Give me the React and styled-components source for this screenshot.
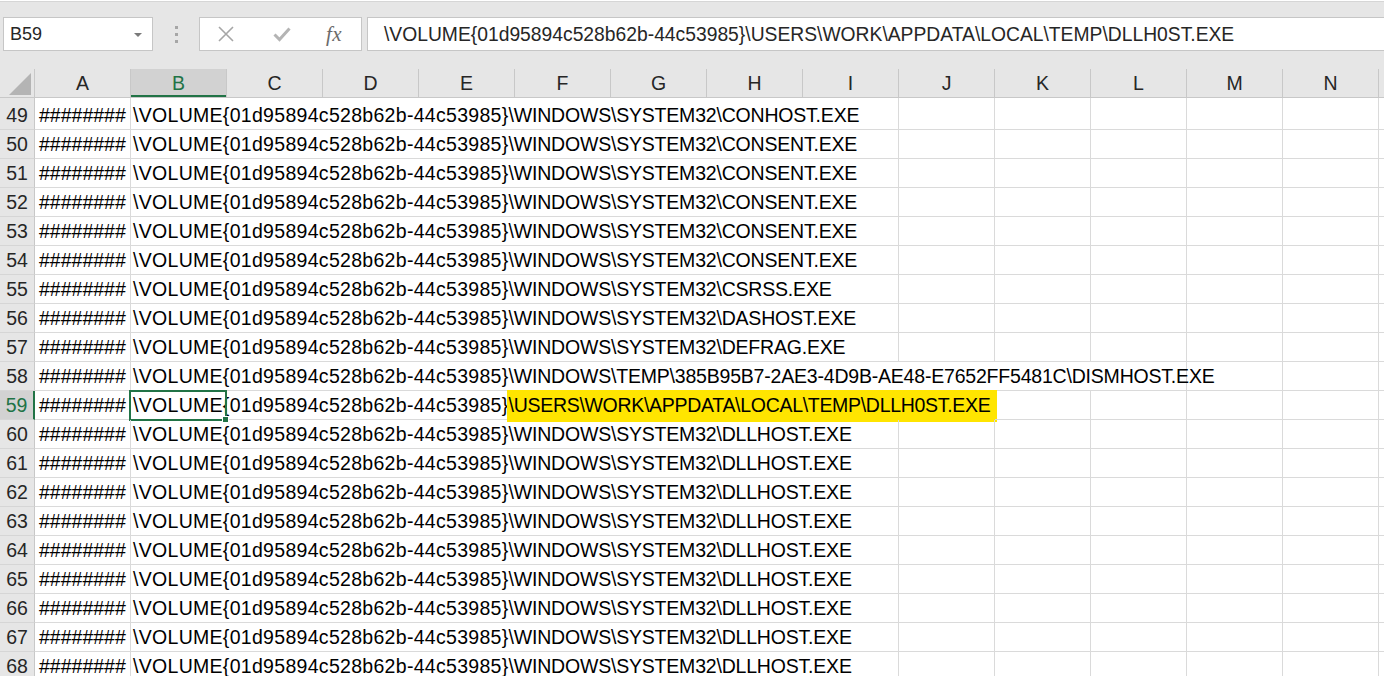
import React from 'react';
import styled, { createGlobalStyle } from 'styled-components';

const GlobalStyle = createGlobalStyle`
  html, body {
    margin: 0;
    padding: 0;
    background: #ffffff;
  }
  body {
    font-family: "Liberation Sans", Arial, sans-serif;
  }
`;

const Window = styled.div`
  width: 1384px;
  height: 676px;
  overflow: hidden;
  background: #ffffff;
`;

const Toolbar = styled.div`
  height: 68px;
  box-sizing: border-box;
  background: #e6e6e6;
  border-top: 1px solid #d6d6d6;
  margin-top: 1px;
  padding: 15px 0 0 3px;
  display: flex;
  align-items: flex-start;
`;

const NameBox = styled.div`
  width: 150px;
  height: 34px;
  box-sizing: border-box;
  background: #ffffff;
  border: 1px solid #c6c6c6;
  display: flex;
  align-items: center;
  justify-content: space-between;
  padding: 1px 10px 0 6px;
  font-size: 18px;
  color: #262626;
`;

const Caret = styled.span`
  width: 0;
  height: 0;
  border-left: 4px solid transparent;
  border-right: 4px solid transparent;
  border-top: 4px solid #7a7a7a;
`;

const Grip = styled.div`
  width: 46px;
  height: 34px;
  display: flex;
  flex-direction: column;
  align-items: center;
  justify-content: center;
  gap: 4px;
`;

const GripDot = styled.span`
  width: 3px;
  height: 3px;
  background: #a6a6a6;
`;

const FxBox = styled.div`
  width: 163px;
  height: 34px;
  box-sizing: border-box;
  background: #ffffff;
  border: 1px solid #c6c6c6;
  display: flex;
  align-items: center;
  padding-left: 18px;
`;

const FxButton = styled.div`
  width: ${({ $w }) => $w}px;
  height: 32px;
  display: flex;
  align-items: center;
  justify-content: flex-start;
`;

const FxLabel = styled.span`
  font-family: "Liberation Serif", "Times New Roman", serif;
  font-style: italic;
  font-size: 21px;
  color: #6b6b6b;
  letter-spacing: 0.5px;
`;

const FormulaInput = styled.div`
  flex: 1;
  margin-left: 5px;
  height: 34px;
  box-sizing: border-box;
  background: #ffffff;
  border: 1px solid #c6c6c6;
  border-right: none;
  display: flex;
  align-items: center;
  padding: 1px 0 0 16px;
  font-size: 19.3px;
  color: #262626;
  white-space: nowrap;
  overflow: hidden;
`;

const HeaderRow = styled.div`
  display: flex;
  height: 28px;
  background: #e6e6e6;
  border-bottom: 1px solid #c8c8c8;
`;

const Corner = styled.div`
  width: 35px;
  flex: none;
  border-right: 1px solid #c8c8c8;
  box-sizing: border-box;
  display: flex;
  align-items: flex-end;
  justify-content: flex-end;
  padding: 0 3px 2px 0;
`;

const ColHeader = styled.div`
  width: 96px;
  flex: none;
  box-sizing: border-box;
  border-right: 1px solid #c8c8c8;
  display: flex;
  align-items: center;
  justify-content: center;
  font-size: 19.5px;
  line-height: 28px;
  color: ${({ $active }) => ($active ? '#217346' : '#262626')};
  background: ${({ $active }) => ($active ? '#d2d2d2' : 'transparent')};
  box-shadow: ${({ $active }) => ($active ? 'inset 0 -2px 0 #217346' : 'none')};
`;

const HeaderFill = styled.div`
  flex: 1;
`;

const Row = styled.div`
  display: flex;
  height: ${({ $h }) => $h}px;
  font-size: 19.5px;
  line-height: 22px;
  position: relative;
`;

const RowHeader = styled.div`
  width: 35px;
  flex: none;
  box-sizing: border-box;
  background: ${({ $active }) => ($active ? '#d2d2d2' : '#e6e6e6')};
  color: ${({ $active }) => ($active ? '#217346' : '#262626')};
  border-right: ${({ $active }) => ($active ? '2px solid #217346' : '1px solid #c8c8c8')};
  border-bottom: 1px solid #d6d6d6;
  display: flex;
  align-items: flex-end;
  justify-content: center;
  padding-bottom: 3px;
`;

const Cell = styled.div`
  width: ${({ $span = 1 }) => $span * 96}px;
  flex: none;
  box-sizing: border-box;
  border-right: 1px solid #dadada;
  border-bottom: 1px solid #dadada;
  display: flex;
  align-items: flex-end;
  padding: 0 0 3px ${({ $pad = 0 }) => $pad}px;
  white-space: nowrap;
  color: #000000;
  position: relative;
`;

const CellText = styled.span`
  display: block;
  white-space: nowrap;
`;

const VolPart = styled.span`
  letter-spacing: 0.3px;
`;

const PathPart = styled.span`
  letter-spacing: -0.2px;
`;

const FillCell = styled.div`
  flex: 1;
  border-bottom: 1px solid #dadada;
`;

const Highlight = styled.span`
  background: #ffe500;
  letter-spacing: -0.3px;
  padding: 4px 7px 6px 2px;
  margin-left: -2px;
`;

const Selection = styled.div`
  position: absolute;
  left: -2px;
  top: -1px;
  width: 98px;
  height: 31px;
  box-sizing: border-box;
  border: 2px solid #217346;
  pointer-events: none;
`;

const FillHandle = styled.span`
  position: absolute;
  right: -4px;
  bottom: -4px;
  width: 5px;
  height: 5px;
  background: #217346;
  border: 1px solid #ffffff;
`;

const COLS = ['A', 'B', 'C', 'D', 'E', 'F', 'G', 'H', 'I', 'J', 'K', 'L', 'M', 'N'];
const VOL = '\\VOLUME{01d95894c528b62b-44c53985}';
const SYS = '\\WINDOWS\\SYSTEM32\\';

const rows = [
  { n: 49, file: SYS + 'CONHOST.EXE', span: 8 },
  { n: 50, file: SYS + 'CONSENT.EXE', span: 8 },
  { n: 51, file: SYS + 'CONSENT.EXE', span: 8 },
  { n: 52, file: SYS + 'CONSENT.EXE', span: 8 },
  { n: 53, file: SYS + 'CONSENT.EXE', span: 8 },
  { n: 54, file: SYS + 'CONSENT.EXE', span: 8 },
  { n: 55, file: SYS + 'CSRSS.EXE', span: 8 },
  { n: 56, file: SYS + 'DASHOST.EXE', span: 8 },
  { n: 57, file: SYS + 'DEFRAG.EXE', span: 8 },
  { n: 58, file: '\\WINDOWS\\TEMP\\385B95B7-2AE3-4D9B-AE48-E7652FF5481C\\DISMHOST.EXE', span: 11 },
  { n: 59, file: '\\USERS\\WORK\\APPDATA\\LOCAL\\TEMP\\DLLH0ST.EXE', span: 9, mark: true },
  { n: 60, file: SYS + 'DLLHOST.EXE', span: 8 },
  { n: 61, file: SYS + 'DLLHOST.EXE', span: 8 },
  { n: 62, file: SYS + 'DLLHOST.EXE', span: 8 },
  { n: 63, file: SYS + 'DLLHOST.EXE', span: 8 },
  { n: 64, file: SYS + 'DLLHOST.EXE', span: 8 },
  { n: 65, file: SYS + 'DLLHOST.EXE', span: 8 },
  { n: 66, file: SYS + 'DLLHOST.EXE', span: 8 },
  { n: 67, file: SYS + 'DLLHOST.EXE', span: 8 },
  { n: 68, file: SYS + 'DLLHOST.EXE', span: 8 },
];

const App = () => {
  return (
    <Window>
      <GlobalStyle />
      <Toolbar>
        <NameBox>
          B59
          <Caret />
        </NameBox>
        <Grip>
          <GripDot />
          <GripDot />
          <GripDot />
        </Grip>
        <FxBox>
          <FxButton $w={55}>
            <svg width="16" height="16" viewBox="0 0 16 16">
              <path d="M1 1 L15 15 M15 1 L1 15" stroke="#a6a6a6" strokeWidth="1.6" fill="none" />
            </svg>
          </FxButton>
          <FxButton $w={53}>
            <svg width="18" height="16" viewBox="0 0 18 16">
              <path d="M1.5 8.5 L6.5 13.5 L16.5 2.5" stroke="#b4b4b4" strokeWidth="3" fill="none" />
            </svg>
          </FxButton>
          <FxButton $w={30}>
            <FxLabel>fx</FxLabel>
          </FxButton>
        </FxBox>
        <FormulaInput>{VOL + '\\USERS\\WORK\\APPDATA\\LOCAL\\TEMP\\DLLH0ST.EXE'}</FormulaInput>
      </Toolbar>

      <HeaderRow>
        <Corner>
          <svg width="22" height="22" viewBox="0 0 22 22">
            <path d="M22 0 L22 22 L0 22 Z" fill="#b4b4b4" />
          </svg>
        </Corner>
        {COLS.map(c => (
          <ColHeader key={c} $active={c === 'B'}>{c}</ColHeader>
        ))}
        <HeaderFill />
      </HeaderRow>

      {rows.map((r, i) => (
        <Row key={r.n} $h={i === 0 ? 32 : 29}>
          <RowHeader $active={r.mark}>{r.n}</RowHeader>
          <Cell $pad={4}>
            <CellText>########</CellText>
          </Cell>
          <Cell $span={r.span} $pad={2}>
            <CellText>
              <VolPart>{VOL}</VolPart>
              {r.mark ? <Highlight>{r.file}</Highlight> : <PathPart>{r.file}</PathPart>}
            </CellText>
            {r.mark && (
              <Selection>
                <FillHandle />
              </Selection>
            )}
          </Cell>
          {Array.from({ length: 13 - r.span }).map((_, k) => (
            <Cell key={k} />
          ))}
          <FillCell />
        </Row>
      ))}
    </Window>
  );
};

export default App;
